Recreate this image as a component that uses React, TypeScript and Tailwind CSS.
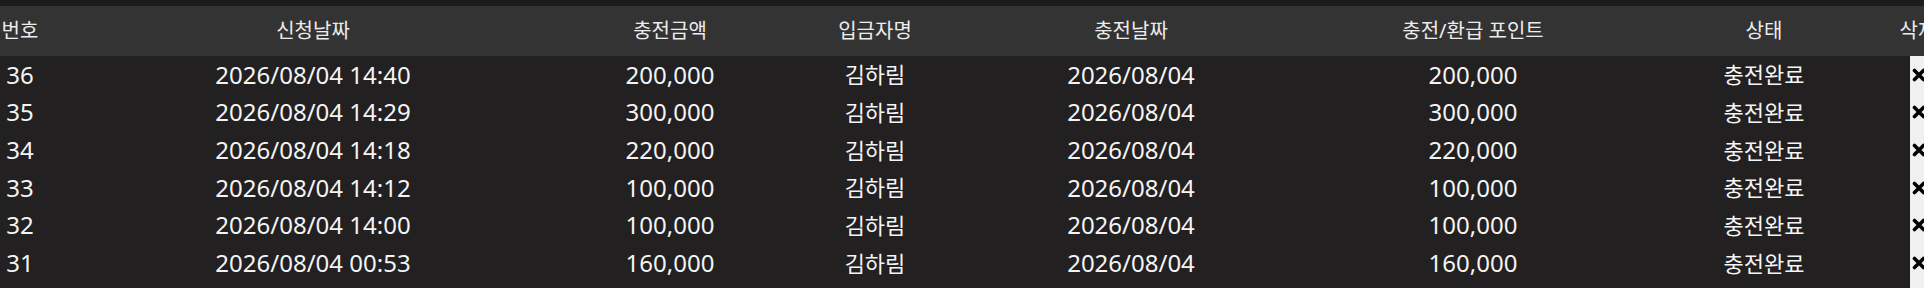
import React from "react";

// --- 데이터 ---
interface ChargeRow {
  no: number;
  requestedAt: string;
  amount: string;
  depositor: string;
  chargedAt: string;
  point: string;
  status: string;
}

const rows: ChargeRow[] = [
  { no: 36, requestedAt: "2026/08/04 14:40", amount: "200,000", depositor: "김하림", chargedAt: "2026/08/04", point: "200,000", status: "충전완료" },
  { no: 35, requestedAt: "2026/08/04 14:29", amount: "300,000", depositor: "김하림", chargedAt: "2026/08/04", point: "300,000", status: "충전완료" },
  { no: 34, requestedAt: "2026/08/04 14:18", amount: "220,000", depositor: "김하림", chargedAt: "2026/08/04", point: "220,000", status: "충전완료" },
  { no: 33, requestedAt: "2026/08/04 14:12", amount: "100,000", depositor: "김하림", chargedAt: "2026/08/04", point: "100,000", status: "충전완료" },
  { no: 32, requestedAt: "2026/08/04 14:00", amount: "100,000", depositor: "김하림", chargedAt: "2026/08/04", point: "100,000", status: "충전완료" },
  { no: 31, requestedAt: "2026/08/04 00:53", amount: "160,000", depositor: "김하림", chargedAt: "2026/08/04", point: "160,000", status: "충전완료" },
];

// column widths (px)
const cols = [
  "w-[40px]",
  "w-[546px]",
  "w-[168px]",
  "w-[242px]",
  "w-[270px]",
  "w-[414px]",
  "w-[168px]",
];

const headers = ["번호", "신청날짜", "충전금액", "입금자명", "충전날짜", "충전/환급 포인트", "상태"];

const XIcon = () => (
  <svg width="14" height="14" viewBox="0 0 14 14" className="shrink-0">
    <path d="M2.5 2.5 L11.5 11.5 M11.5 2.5 L2.5 11.5" stroke="#000" strokeWidth="3.6" strokeLinecap="round" />
  </svg>
);

const num = "text-[24px] text-[#f4f4f4]";
const kor = "text-[22px] text-[#f4f4f4]";

export default function App() {
  return (
    <div
      className="w-[1924px] h-[288px] overflow-hidden bg-[#222021]"
      style={{ fontFamily: '"Noto Sans", "Noto Sans CJK KR", sans-serif' }}
    >
      <div className="h-[6px] bg-[#1c1c1c]" />

      {/* 헤더 */}
      <div className="flex h-[50px] bg-[#333333] text-[20px] text-[#ececec] whitespace-nowrap">
        {headers.map((h, i) => (
          <div key={h} className={`${cols[i]} shrink-0 flex items-center justify-center`}>
            {h}
          </div>
        ))}
        <div className="w-[140px] shrink-0 flex items-center justify-center">삭제</div>
      </div>

      {/* 목록 */}
      <div>
        {rows.map((r) => (
          <div key={r.no} className="flex h-[37.67px] whitespace-nowrap">
            <div className={`${cols[0]} shrink-0 flex items-center justify-center ${num}`}>{r.no}</div>
            <div className={`${cols[1]} shrink-0 flex items-center justify-center ${num}`}>{r.requestedAt}</div>
            <div className={`${cols[2]} shrink-0 flex items-center justify-center ${num}`}>{r.amount}</div>
            <div className={`${cols[3]} shrink-0 flex items-center justify-center ${kor}`}>{r.depositor}</div>
            <div className={`${cols[4]} shrink-0 flex items-center justify-center ${num}`}>{r.chargedAt}</div>
            <div className={`${cols[5]} shrink-0 flex items-center justify-center ${num}`}>{r.point}</div>
            <div className={`${cols[6]} shrink-0 flex items-center justify-center ${kor}`}>{r.status}</div>
            <div className="w-[140px] shrink-0 flex pl-[62px]">
              <div className="flex-1 bg-[#f0f0f0] flex items-center pl-[2px]">
                <XIcon />
              </div>
            </div>
          </div>
        ))}
        <div className="flex h-[60px]">
          <div className="w-[1910px] shrink-0" />
          <div className="flex-1 bg-[#f0f0f0]" />
        </div>
      </div>
    </div>
  );
}
